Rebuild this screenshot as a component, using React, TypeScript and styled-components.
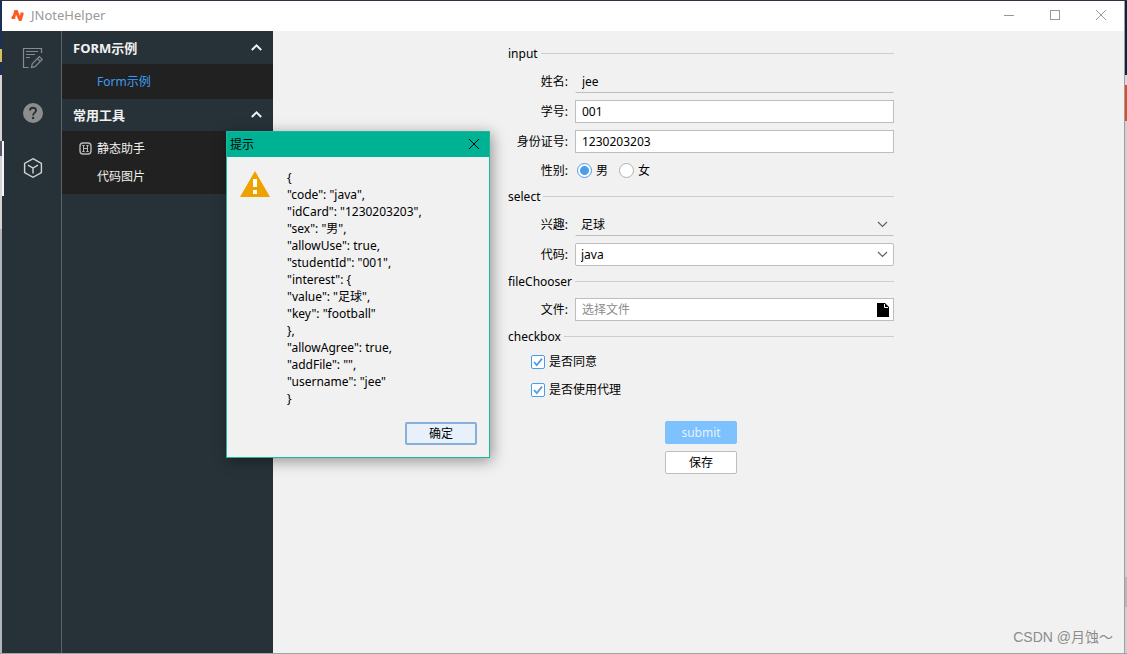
import React, { useState } from "react";
import styled, { createGlobalStyle } from "styled-components";

const GlobalStyle = createGlobalStyle`
  * { box-sizing: border-box; }
  body {
    margin: 0;
    font-family: "Noto Sans", "Noto Sans CJK SC", sans-serif;
    font-size: 12px;
    line-height: 17px;
    color: #000;
  }
  button, input, select { font: inherit; color: inherit; margin: 0; }
  h1, h2, p, ul { margin: 0; padding: 0; font: inherit; }
`;

const Desktop = styled.div`
  display: grid;
  grid-template-columns: 2px 1fr 3px;
  min-height: 100vh;
  padding: 1px 0;
  background: linear-gradient(#2d3142 0 50%, #a0a4a6 50%);
`;

const LeftEdge = styled.div`
  position: relative;
  background: linear-gradient(
    #1c2f57 0 48px, #d9bf62 48px 61px, #1c2f57 61px 74px, #d4d4d4 74px 140px,
    #5a5a6c 140px 155px, #d4d4d4 155px 228px, #b4b7b9 228px
  );
  &::after {
    content: "";
    position: absolute;
    z-index: 1;
    top: 140px;
    left: 2px;
    width: 2px;
    height: 55px;
    background: #f4f4fa;
  }
`;

const RightEdge = styled.div`
  border-left: 1px solid #a0a0a0;
  background: linear-gradient(
    #0b2145 0 74px, #d8d8d8 74px 84px, #d94f2b 84px 120px, #d0d0d0 120px 576px,
    #b8b8b8 576px 606px, #d0d0d0 606px
  );
`;

const Frame = styled.div`
  position: relative;
  display: flex;
  flex-direction: column;
  background: #f1f1f1;
`;

const TitleBar = styled.header`
  display: flex;
  align-items: center;
  height: 30px;
  padding: 0 17px 2px 9px;
  background: #fff;
  color: #999;
`;

const AppName = styled.h1`
  flex: 1;
  padding-left: 7px;
  font-size: 13px;
`;

const WindowControls = styled.div`
  display: flex;
  gap: 34px;
`;

const IconButton = styled.button`
  display: flex;
  padding: 0;
  border: 0;
  background: none;
  color: inherit;
`;

const Body = styled.div`
  display: flex;
  flex: 1;
`;

const Rail = styled.nav`
  display: flex;
  flex-direction: column;
  align-items: center;
  gap: 31px;
  width: 60px;
  padding: 15px 0 0 2px;
  border-right: 1px solid #59636a;
  background: #273238;
`;

const Menu = styled.nav`
  width: 211px;
  padding-top: 1px;
  background: #273238;
  color: #f1f1f1;
`;

const MenuHeader = styled.button`
  display: flex;
  align-items: center;
  justify-content: space-between;
  width: 100%;
  height: 32px;
  padding: 0 10px 0 11px;
  border: 0;
  background: #273238;
  color: #f1f1f1;
  font-size: 13px;
  font-weight: 700;
`;

const MenuList = styled.ul`
  padding: 3px 0 4px;
  background: #212121;
  list-style: none;
`;

const MenuLink = styled.a<{ $active?: boolean }>`
  display: grid;
  grid-template-columns: 13px 1fr;
  align-items: center;
  gap: 5px;
  height: 28px;
  padding-left: 17px;
  color: ${(p) => (p.$active ? "#3d9df2" : "#f1f1f1")};
  text-decoration: none;
`;

const Main = styled.main`
  display: flex;
  flex: 1;
  flex-direction: column;
  align-items: center;
  padding: 14px 0 0 5px;
`;

const Form = styled.form`
  display: flex;
  flex-direction: column;
  gap: 7px;
  width: 386px;
`;

const SectionTitle = styled.h2`
  display: flex;
  align-items: center;
  gap: 3px;
  height: 18px;
  padding-bottom: 2px;
  &::after {
    content: "";
    flex: 1;
    height: 1px;
    background: #cdcdcd;
  }
`;

const Row = styled.div<{ $height?: number }>`
  display: grid;
  grid-template-columns: 60px 1fr;
  align-items: center;
  gap: 7px;
  height: ${(p) => p.$height ?? 23}px;
`;

const RowLabel = styled.label`
  text-align: right;
`;

const TextInput = styled.input<{ $line?: boolean }>`
  width: 100%;
  height: 23px;
  padding: 0 6px;
  border: 1px solid ${(p) => (p.$line ? "transparent" : "#bebebe")};
  border-bottom-color: #bebebe;
  background: ${(p) => (p.$line ? "transparent" : "#fff")};
  outline: 0;
  &::placeholder { color: #8c8c8c; opacity: 1; }
`;

const Field = styled.div`
  display: grid;
  align-items: center;
  > * { grid-area: 1 / 1; }
  > svg, > button { justify-self: end; margin-right: 5px; }
  > svg { pointer-events: none; }
`;

const Select = styled.select<{ $line?: boolean }>`
  appearance: none;
  width: 100%;
  height: 23px;
  padding: 0 24px 0 5px;
  border: 1px solid ${(p) => (p.$line ? "transparent" : "#bebebe")};
  border-bottom-color: #bebebe;
  border-radius: ${(p) => (p.$line ? 0 : 2)}px;
  background: ${(p) => (p.$line ? "transparent" : "#fff")};
  outline: 0;
`;

const Options = styled.div`
  display: flex;
  gap: 11px;
  padding-left: 2px;
`;

const Choice = styled.label`
  display: flex;
  align-items: center;
  gap: 4px;
  height: 17px;
`;

const Radio = styled.input.attrs({ type: "radio" })`
  appearance: none;
  width: 15px;
  height: 15px;
  border: 1px solid #b0b0b0;
  border-radius: 50%;
  background: #fff;
  &:checked {
    border-color: #4a9de8;
    background: radial-gradient(circle, #4a9de8 0 4px, #fff 5px);
  }
`;

const CheckGroup = styled.div`
  display: flex;
  flex-direction: column;
  gap: 11px;
  padding-left: 23px;
`;

const CheckMark = styled.span`
  display: grid;
  > * { grid-area: 1 / 1; }
  > svg { pointer-events: none; }
`;

const Checkbox = styled.input.attrs({ type: "checkbox" })`
  appearance: none;
  width: 14px;
  height: 14px;
  border: 1px solid #4a9de8;
  border-radius: 2px;
  background: #fff;
  & + svg { visibility: hidden; }
  &:checked + svg { visibility: visible; }
`;

const Actions = styled.div`
  display: flex;
  flex-direction: column;
  align-items: center;
  gap: 7px;
  padding-top: 16px;
`;

type Tone = "primary" | "plain" | "focused";
const tones: Record<Tone, string> = {
  primary: "border: 1px solid #7dc1ff; background: #7dc1ff; color: #e4f1fd;",
  plain: "border: 1px solid #bebebe; background: #fff;",
  focused: "border: 2px solid #87afda; background: #e8f1fb;",
};

const Button = styled.button<{ $tone: Tone }>`
  width: 72px;
  height: 23px;
  padding: 0;
  border-radius: 2px;
  ${(p) => tones[p.$tone]}
`;

const Dialog = styled.section`
  position: absolute;
  top: 130px;
  left: 224px;
  width: 264px;
  border: 1px solid #1fb49b;
  background: #f1f1f1;
  box-shadow: 2px 3px 14px rgba(0, 0, 0, 0.4);
`;

const DialogTitle = styled.header`
  display: flex;
  align-items: center;
  justify-content: space-between;
  height: 25px;
  padding: 0 9px 1px 3px;
  background: #00b294;
`;

const DialogBody = styled.div`
  display: flex;
  gap: 17px;
  padding: 12px 13px 0;
`;

const Message = styled.div`
  flex: 1;
`;

const DialogFooter = styled.footer`
  display: flex;
  justify-content: flex-end;
  padding: 15px 12px 12px;
`;

const Watermark = styled.p`
  position: absolute;
  right: 11px;
  bottom: 7px;
  color: #8c8c8c;
  font-family: "Liberation Sans", "Noto Sans CJK SC", sans-serif;
  font-size: 14px;
`;

const Caret = () => (
  <svg width="13" height="13" viewBox="0 0 13 13" fill="none" stroke="#606060" strokeWidth="1.2" aria-hidden="true">
    <path d="M2 4L6.5 8.5L11 4" />
  </svg>
);

const ChevronUp = () => (
  <svg width="13" height="11" viewBox="0 0 13 11" fill="none" stroke="#f1f1f1" strokeWidth="2" aria-hidden="true">
    <path d="M1.8 7L6.5 2.3L11.2 7" />
  </svg>
);

const Logo = () => (
  <svg width="13" height="13" viewBox="0 0 13 13" aria-hidden="true">
    <path d="M0.5 8L2 6L3.5 1H6.5L9 7L9.5 3.5H12.5V5.5L10.5 12H8L5 5.5L4 10H0.5Z" fill="#ff5a1f" />
  </svg>
);

const message = [
  "{", '"code": "java",', '"idCard": "1230203203",', '"sex": "男",', '"allowUse": true,',
  '"studentId": "001",', '"interest": {', '"value": "足球",', '"key": "football"', "},",
  '"allowAgree": true,', '"addFile": "",', '"username": "jee"', "}",
];

const Check = ({ label }: { label: string }) => (
  <Choice>
    <CheckMark>
      <Checkbox defaultChecked />
      <svg width="14" height="14" viewBox="0 0 14 14" fill="none" stroke="#4a9de8" strokeWidth="1.8" aria-hidden="true">
        <path d="M3 7L5.8 10.2L11 3.6" />
      </svg>
    </CheckMark>
    {label}
  </Choice>
);

export default function App() {
  const [open, setOpen] = useState(true);
  return (
    <>
      <GlobalStyle />
      <Desktop>
        <LeftEdge />
        <Frame>
          <TitleBar>
            <Logo />
            <AppName>JNoteHelper</AppName>
            <WindowControls>
              <IconButton aria-label="Minimize">
                <svg width="12" height="12" viewBox="0 0 12 12" stroke="currentColor"><path d="M1 6.5H11" /></svg>
              </IconButton>
              <IconButton aria-label="Maximize">
                <svg width="12" height="12" viewBox="0 0 12 12" fill="none" stroke="currentColor"><rect x="1.5" y="1.5" width="9" height="9" /></svg>
              </IconButton>
              <IconButton aria-label="Close">
                <svg width="12" height="12" viewBox="0 0 12 12" stroke="currentColor"><path d="M1 1L11 11M11 1L1 11" /></svg>
              </IconButton>
            </WindowControls>
          </TitleBar>
          <Body>
            <Rail>
              <IconButton aria-label="Notes">
                <svg width="24" height="24" viewBox="0 0 24 24" fill="none" stroke="#858b8e" strokeWidth="1.2">
                  <path d="M20.5 7V2.5H2.5V21.5H7.5M5 5.5H17M5 8.5H14M5 11.5H9" />
                  <path d="M10.5 21.5L11.3 17.8L18.4 10.7L21.2 13.4L14 20.6ZM16.5 12.6L19.2 15.3" />
                </svg>
              </IconButton>
              <IconButton aria-label="Help">
                <svg width="24" height="24" viewBox="0 0 24 24" fill="none">
                  <circle cx="12" cy="12" r="10" fill="#8d8d8d" />
                  <path d="M9 9.6C9 7.8 10.2 6.8 12 6.8S15 7.8 15 9.4C15 11.6 12.1 11.7 12.1 14.4" stroke="#273238" strokeWidth="1.9" />
                  <circle cx="12.1" cy="17" r="1.2" fill="#273238" />
                </svg>
              </IconButton>
              <IconButton aria-label="Tools">
                <svg width="24" height="24" viewBox="0 0 24 24" fill="none" stroke="#d2d5d6" strokeWidth="1.4">
                  <path d="M12 2.7L20.4 7.3V16.7L12 21.3L3.6 16.7V7.3ZM7 9.2L12 12L17 9.2M12 12V17.6" />
                </svg>
              </IconButton>
            </Rail>
            <Menu>
              <MenuHeader>FORM示例<ChevronUp /></MenuHeader>
              <MenuList>
                <li><MenuLink href="#form" $active><span />Form示例</MenuLink></li>
              </MenuList>
              <MenuHeader>常用工具<ChevronUp /></MenuHeader>
              <MenuList>
                <li>
                  <MenuLink href="#static">
                    <svg width="13" height="13" viewBox="0 0 13 13" fill="none" stroke="#b8b8b8" aria-hidden="true">
                      <rect x="1" y="1" width="11" height="11" rx="3" strokeWidth="1.4" />
                      <path d="M4.5 3.5V9.5M8.5 3.5V9.5M4.5 6.5H8.5M3.3 3.5H5.7M7.3 3.5H9.7M3.3 9.5H5.7M7.3 9.5H9.7" />
                    </svg>
                    静态助手
                  </MenuLink>
                </li>
                <li><MenuLink href="#code"><span />代码图片</MenuLink></li>
              </MenuList>
            </Menu>
            <Main>
              <Form onSubmit={(e) => e.preventDefault()}>
                <SectionTitle>input</SectionTitle>
                <Row>
                  <RowLabel htmlFor="username">姓名:</RowLabel>
                  <TextInput id="username" $line defaultValue="jee" />
                </Row>
                <Row>
                  <RowLabel htmlFor="studentId">学号:</RowLabel>
                  <TextInput id="studentId" defaultValue="001" />
                </Row>
                <Row>
                  <RowLabel htmlFor="idCard">身份证号:</RowLabel>
                  <TextInput id="idCard" defaultValue="1230203203" />
                </Row>
                <Row $height={21} role="radiogroup" aria-labelledby="sex">
                  <RowLabel as="span" id="sex">性别:</RowLabel>
                  <Options>
                    <Choice><Radio name="sex" defaultChecked />男</Choice>
                    <Choice><Radio name="sex" />女</Choice>
                  </Options>
                </Row>
                <SectionTitle>select</SectionTitle>
                <Row>
                  <RowLabel htmlFor="interest">兴趣:</RowLabel>
                  <Field>
                    <Select id="interest" $line><option>足球</option></Select>
                    <Caret />
                  </Field>
                </Row>
                <Row>
                  <RowLabel htmlFor="code">代码:</RowLabel>
                  <Field>
                    <Select id="code"><option>java</option></Select>
                    <Caret />
                  </Field>
                </Row>
                <SectionTitle>fileChooser</SectionTitle>
                <Row>
                  <RowLabel htmlFor="file">文件:</RowLabel>
                  <Field>
                    <TextInput id="file" placeholder="选择文件" />
                    <IconButton type="button" aria-label="Browse">
                      <svg width="12" height="14" viewBox="0 0 12 14">
                        <path d="M0 0H8L12 4V14H0Z" fill="#000" />
                        <path d="M7.5 1V4.5H11" fill="none" stroke="#fff" />
                      </svg>
                    </IconButton>
                  </Field>
                </Row>
                <SectionTitle>checkbox</SectionTitle>
                <CheckGroup>
                  <Check label="是否同意" />
                  <Check label="是否使用代理" />
                </CheckGroup>
                <Actions>
                  <Button type="submit" $tone="primary">submit</Button>
                  <Button type="button" $tone="plain">保存</Button>
                </Actions>
              </Form>
            </Main>
          </Body>
          {open && (
            <Dialog role="dialog" aria-labelledby="dialog-title">
              <DialogTitle>
                <h2 id="dialog-title">提示</h2>
                <IconButton aria-label="Close dialog" onClick={() => setOpen(false)}>
                  <svg width="12" height="12" viewBox="0 0 12 12" stroke="#000"><path d="M1 1L11 11M11 1L1 11" /></svg>
                </IconButton>
              </DialogTitle>
              <DialogBody>
                <svg width="30" height="29" viewBox="0 0 30 29" aria-hidden="true">
                  <path d="M15 2L30 28H0Z" fill="#eda200" />
                  <path d="M13 10H17V18H13ZM13 21H17V25H13Z" fill="#fff" />
                </svg>
                <Message>
                  {message.map((line) => <p key={line}>{line}</p>)}
                </Message>
              </DialogBody>
              <DialogFooter>
                <Button $tone="focused" onClick={() => setOpen(false)}>确定</Button>
              </DialogFooter>
            </Dialog>
          )}
          <Watermark>CSDN @月蚀～</Watermark>
        </Frame>
        <RightEdge />
      </Desktop>
    </>
  );
}
